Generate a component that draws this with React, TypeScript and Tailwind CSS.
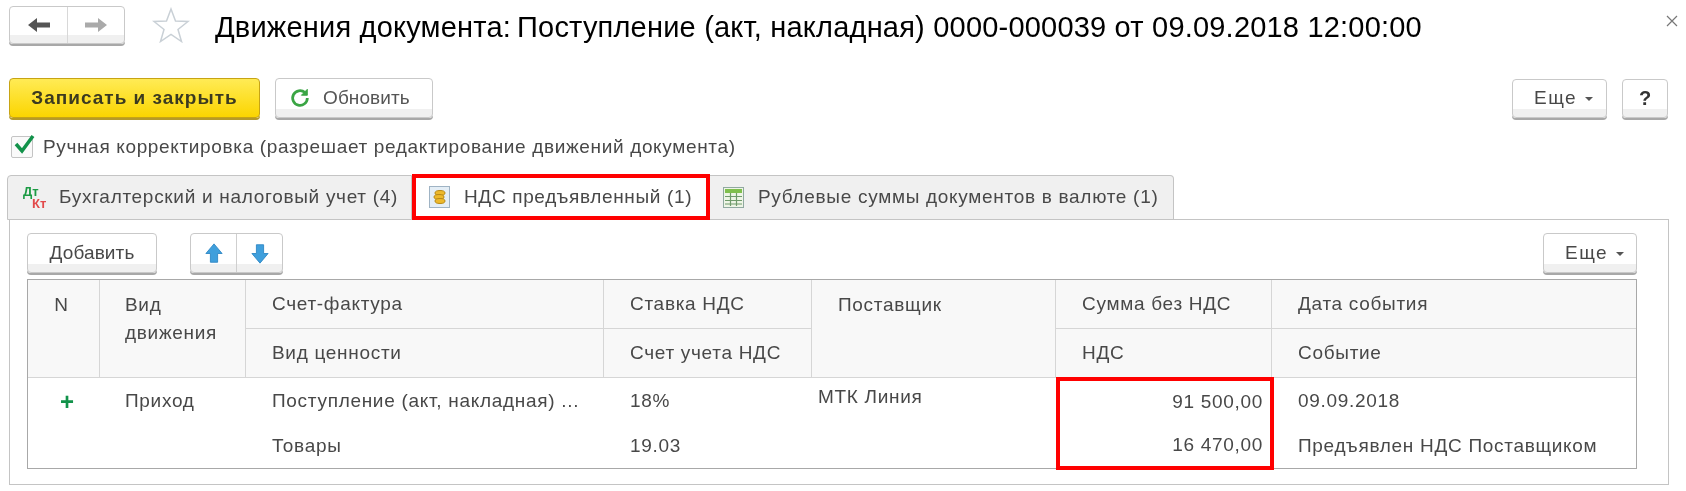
import React from 'react';

const btn =
  'flex items-center border border-[#c9c9c9] rounded-[4px] shadow-[0_2px_0_#a8a8a8] bg-[linear-gradient(#ffffff_78%,#f0f0f0_78%)]';
const headCell = 'border-r border-b border-[#d6d6d6] bg-[#f8f8f8] flex items-center';
const bodyText = 'text-[19px] text-[#484848] tracking-[0.7px] whitespace-nowrap';

const BlueArrow = ({ down }: { down?: boolean }) => (
  <svg width="18" height="21" viewBox="0 0 20 24" preserveAspectRatio="none" className={down ? 'rotate-180' : ''}>
    <path d="M10 1 L19 12 L14 12 L14 22 L6 22 L6 12 L1 12 Z" fill="#3f9fdc" stroke="#2d86c4" strokeWidth="1" />
  </svg>
);

const Caret = () => <span className="ml-2 mt-[2px] border-x-[4px] border-t-[4px] border-x-transparent border-t-[#555]" />;

export default function App() {
  return (
    <div className="w-[1686px] h-[491px] overflow-hidden bg-white pt-[5px] pl-[9px] blur-[0.4px] font-['Liberation_Sans',Arial,sans-serif] text-[19px] text-[#484848]">
      {/* Header */}
      <div className="flex items-center h-[39px] w-[1669px]">
        <div className={`${btn} w-[116px] h-[38px]`}>
          <div className="w-[58px] h-full flex items-center justify-center border-r border-[#d8d8d8]">
            <svg width="24" height="16" viewBox="0 0 24 16">
              <path d="M1 8 L10 1 V5.500 H23 V10.500 H10 V15 Z" fill="#555" />
            </svg>
          </div>
          <div className="flex-1 flex items-center justify-center">
            <svg width="24" height="16" viewBox="0 0 24 16">
              <path d="M23 8 L14 1 V5.500 H1 V10.500 H14 V15 Z" fill="#aaa" />
            </svg>
          </div>
        </div>
        <svg width="38" height="36" viewBox="0 0 38 36" className="ml-[27px]">
          <path d="M19 2 L23.500 14 L36 14.500 L26 22.500 L29.500 34.500 L19 27.500 L8.500 34.500 L12 22.500 L2 14.500 L14.500 14 Z" fill="#fff" stroke="#c9d0d6" strokeWidth="1.500" />
        </svg>
        <h1 className="ml-[25px] mt-[7px] text-[29px] text-black whitespace-nowrap tracking-[0.2px]">
          Движения документа:<span className="ml-[6px]">Поступление (акт, накладная) 0000-000039 от 09.09.2018 12:00:00</span>
        </h1>
        <svg width="12" height="12" viewBox="0 0 12 12" className="ml-auto -mt-[8px] text-[#777]">
          <path d="M1 1 L11 11 M11 1 L1 11" stroke="currentColor" strokeWidth="1.200" />
        </svg>
      </div>

      {/* Command bar */}
      <div className="flex items-center mt-[34px] h-[40px] w-[1659px]">
        <button className="w-[251px] h-[40px] rounded-[4px] border border-[#c7a414] shadow-[0_2px_0_#b59a2a] bg-[linear-gradient(#ffeb55,#fbd500)] text-[19px] font-bold text-[#3b3a20] tracking-[1px]">
          Записать и закрыть
        </button>
        <button className={`${btn} w-[158px] h-[40px] ml-[15px] pl-[13px]`}>
          <svg width="22" height="22" viewBox="0 0 24 24" fill="none" stroke="#3aa544" strokeWidth="3">
            <path d="M20 12a8 8 0 1 1-2.600-5.900" />
            <path d="M20 2.500v6.500h-6.500z" fill="#3aa544" strokeWidth="1" />
          </svg>
          <span className="ml-[12px] tracking-[0.1px] text-[#555]">Обновить</span>
        </button>
        <button className={`${btn} w-[95px] h-[39px] ml-auto pl-[21px]`}>
          <span className="tracking-[1.5px]">Еще</span>
          <Caret />
        </button>
        <button className={`${btn} w-[46px] h-[39px] ml-[15px] justify-center font-bold text-[20px] text-[#333]`}>?</button>
      </div>

      {/* Checkbox */}
      <div className="flex items-center mt-[17px] ml-[2px] h-[24px]">
        <div className="relative w-[22px] h-[22px] border border-[#c4c4c4] rounded-[2px] bg-[#fafafa]">
          <svg width="24" height="24" viewBox="0 0 24 24" className="absolute -top-[5px] -left-[0px]">
            <path d="M4 12 L10 19 L21 4" fill="none" stroke="#12924a" strokeWidth="3.500" />
          </svg>
        </div>
        <span className="ml-[10px] tracking-[0.65px] whitespace-nowrap">Ручная корректировка (разрешает редактирование движений документа)</span>
      </div>

      {/* Tabs */}
      <div className="flex items-stretch mt-[15px] h-[46px] -ml-[2px] relative z-10">
        <div className="w-[405px] mt-[1px] h-[45px] flex items-center pl-[15px] bg-[#f0f0f0] border border-[#c4c4c4] rounded-tl-[4px]">
          <div className="w-[27px] font-bold text-[13px] leading-[12px]">
            <div className="text-[#1c9b44]">Дт</div>
            <div className="text-[#e2494a] ml-[9px]">Кт</div>
          </div>
          <span className="ml-[9px] tracking-[0.7px] whitespace-nowrap">Бухгалтерский и налоговый учет (4)</span>
        </div>
        <div className="w-[298px] flex items-center pl-[13px] bg-white border-[4px] border-[#ff0000]">
          <svg width="21" height="22" viewBox="0 0 21 22">
            <rect x="0.500" y="0.500" width="20" height="21" fill="#e4eef6" stroke="#9fb3c4" />
            <ellipse cx="11" cy="7" rx="5" ry="2.500" fill="#edb92c" stroke="#b98a16" />
            <ellipse cx="10" cy="11" rx="5" ry="2.500" fill="#edb92c" stroke="#b98a16" />
            <ellipse cx="11" cy="15" rx="5" ry="2.500" fill="#edb92c" stroke="#b98a16" />
          </svg>
          <span className="ml-[14px] tracking-[0.65px] whitespace-nowrap">НДС предъявленный (1)</span>
        </div>
        <div className="w-[464px] mt-[1px] h-[45px] flex items-center pl-[13px] bg-[#f0f0f0] border border-l-0 border-[#c4c4c4] rounded-tr-[4px]">
          <svg width="21" height="21" viewBox="0 0 21 21">
            <rect x="0.500" y="0.500" width="20" height="20" fill="#eef5e6" stroke="#90a9a0" />
            <rect x="2" y="2" width="17" height="4" fill="#7fbf4d" />
            <path d="M2 9.500H19M2 13.500H19M2 17H19M7.500 6V19M13.500 6V19" stroke="#6f9a6a" strokeWidth="1.200" />
          </svg>
          <span className="ml-[14px] tracking-[0.7px] whitespace-nowrap">Рублевые суммы документов в валюте (1)</span>
        </div>
      </div>

      {/* Panel */}
      <div className="w-[1660px] h-[266px] -mt-[1px] border border-[#c4c4c4] pl-[17px] pt-[13px]">
        <div className="flex items-center h-[40px] w-[1610px]">
          <button className={`${btn} w-[130px] h-[40px] justify-center tracking-[0.1px]`}>Добавить</button>
          <div className={`${btn} w-[93px] h-[40px] ml-[33px]`}>
            <div className="w-[46px] h-full flex items-center justify-center border-r border-[#cfcfcf]">
              <BlueArrow />
            </div>
            <div className="flex-1 flex items-center justify-center">
              <BlueArrow down />
            </div>
          </div>
          <button className={`${btn} w-[94px] h-[40px] ml-auto pl-[21px]`}>
            <span className="tracking-[1.5px]">Еще</span>
            <Caret />
          </button>
        </div>

        <div className="mt-[6px] w-[1610px] h-[190px] border border-[#a8a8a8] grid grid-cols-[72px_146px_358px_208px_244px_216px_1fr] grid-rows-[49px_49px_47px_1fr]">
          <div className={`${headCell} row-span-2 justify-center !items-start pt-[11px] pr-[4px] ${bodyText}`}>N</div>
          <div className={`${headCell} row-span-2 !items-start pt-[11px] pl-[25px] leading-[28px] ${bodyText}`}>
            <div>
              Вид
              <br />
              движения
            </div>
          </div>
          <div className={`${headCell} pl-[26px] ${bodyText}`}>Счет-фактура</div>
          <div className={`${headCell} pl-[26px] ${bodyText}`}>Ставка НДС</div>
          <div className={`${headCell} row-span-2 !items-start pt-[11px] pl-[26px] ${bodyText}`}>Поставщик</div>
          <div className={`${headCell} pl-[26px] ${bodyText}`}>Сумма без НДС</div>
          <div className={`${headCell} pl-[26px] border-r-0 ${bodyText}`}>Дата события</div>
          <div className={`${headCell} pl-[26px] ${bodyText}`}>Вид ценности</div>
          <div className={`${headCell} pl-[26px] ${bodyText}`}>Счет учета НДС</div>
          <div className={`${headCell} pl-[26px] ${bodyText}`}>НДС</div>
          <div className={`${headCell} pl-[26px] border-r-0 ${bodyText}`}>Событие</div>

          <div className="flex items-center justify-center pl-[6px] text-[24px] font-bold leading-none text-[#12924a]">+</div>
          <div className={`flex items-center pl-[25px] ${bodyText}`}>Приход</div>
          <div className={`flex items-center pl-[26px] tracking-[0.6px] ${bodyText}`}>Поступление (акт, накладная) ...</div>
          <div className={`flex items-center pl-[26px] ${bodyText}`}>18%</div>
          <div className={`row-span-2 pt-[5px] pl-[6px] ${bodyText}`}>МТК Линия</div>
          <div className={`row-span-2 -mt-[1px] -mb-[2px] -mr-[2px] border-[4px] border-[#ff0000] flex flex-col justify-around items-end pr-[7px] ${bodyText}`}>
            <span>91 500,00</span>
            <span>16 470,00</span>
          </div>
          <div className={`flex items-center pl-[26px] ${bodyText}`}>09.09.2018</div>

          <div />
          <div />
          <div className={`flex items-center pl-[26px] ${bodyText}`}>Товары</div>
          <div className={`flex items-center pl-[26px] ${bodyText}`}>19.03</div>
          <div className={`flex items-center pl-[26px] ${bodyText}`}>Предъявлен НДС Поставщиком</div>
        </div>
      </div>
    </div>
  );
}
